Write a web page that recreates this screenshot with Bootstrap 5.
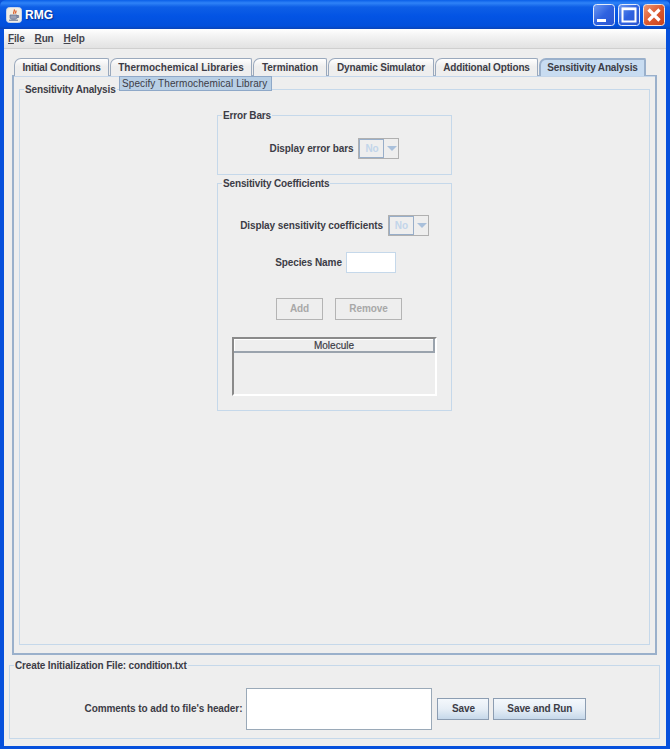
<!DOCTYPE html>
<html lang="en">
<head>
<meta charset="utf-8">
<title>RMG</title>
<link href="https://cdn.jsdelivr.net/npm/bootstrap@5.3.0/dist/css/bootstrap.min.css" rel="stylesheet">
<style>
html,body{margin:0;height:749px;overflow:hidden;background:#0a50d8}
body{font-family:"Liberation Sans",Arial,sans-serif;font-size:10px;letter-spacing:-.09px;font-weight:700;color:#3c3c46;line-height:14px}
.xp-win{width:670px;height:749px;background:#0650dc;padding:0 4px 3px 4px;border-radius:6px 6px 0 0}
.xp-title{height:29px;margin:0 -4px;padding:0 5px 0 6px;background:linear-gradient(#0a5fe8 0,#2f83f7 3px,#0e5fe6 7px,#0354e4 16px,#0250dc 26px,#0a44b8 29px);border-radius:6px 6px 0 0}
.xp-appicon{width:16px;height:16px;margin-right:3px;flex:none}
.xp-name{font-size:12px;letter-spacing:0;font-weight:700;color:#fff;text-shadow:1px 1px 1px #0a2f8f}
.xp-wbtn{width:22px;height:22px;flex:none;display:block}
.xp-wbtns{gap:3px;margin-top:1px}
.xp-body{height:717px;background:#eeeeee}
.xp-menu{height:20px;background:linear-gradient(#ffffff,#f2f2f2 40%,#e2e2e2);border-bottom:1px solid #cfcfcf;padding-left:4px;gap:10px;letter-spacing:-.16px}
.xp-menu span{color:#44444c}
.xp-menu u{text-decoration-thickness:1px;text-underline-offset:1px}
.xp-tabs.nav{margin:9px 0 0 10px;height:17px;border:0;gap:1px;flex-wrap:nowrap;position:relative;z-index:1}
.xp-tabs .nav-link{height:18px;padding:0;line-height:17px;text-align:center;border:1px solid #9aa9bd;border-bottom:0;border-radius:7px 2px 0 0;background:linear-gradient(#ffffff,#eeeeee 45%);color:#3c3c46;font-size:10px;font-weight:700;margin:0;letter-spacing:-.16px}
.xp-tabs .nav-link.active{background:#c8dcf1;border:2px solid #9ab0cb;border-bottom:0;line-height:15px;color:#3c3c46}
.xp-t1{width:95px}.xp-t2{width:142px}.xp-t3{width:74px}.xp-t4{width:106px}.xp-t5{width:103px}.xp-t6{width:107px}
.xp-tabs .nav-link.xp-t2{letter-spacing:.05px}
.xp-tabs .nav-link.xp-t3{letter-spacing:-.05px}
.xp-panel{margin:0 9px 0 8px;height:580px;border:2px solid #9ab0cb;border-top-width:1px;padding:6px 5px 7px 5px;position:relative}
.xp-panel::before{content:"";position:absolute;left:0;right:0;top:0;height:1px;background:#c4d6ea}
fieldset.xp-set{border:1px solid #c5d8ea;margin:0;padding:0;min-width:0}
fieldset.xp-set>legend{float:none;width:auto;font-size:10px;font-weight:700;line-height:12px;margin:0 0 0 4px;padding:2px 1px 0;color:#3c3c46;letter-spacing:-.15px}
.xp-outer{height:563px;padding-top:0}
.xp-col{width:235px;margin:12px auto 0}
fieldset.xp-err{height:67px;margin-bottom:1px}
fieldset.xp-sens{height:235px}
.xp-errrow{margin-top:16px;height:21px}
.xp-combo{width:41px;height:21px;flex:none;margin-left:5px;border:1px solid #b0b0b0;background:#eeeeee}
.xp-combo b{width:25px;height:19px;border:1px solid #98aec9;margin:0;text-align:center;line-height:17px;color:#c2d5ea;font-weight:700;display:block}
.xp-combo i{flex:1;display:block;position:relative}
.xp-combo i::after{content:"";position:absolute;left:3px;top:7px;border:5px solid transparent;border-top:5px solid #a9c0db;border-bottom:0}
.xp-senrow{margin-top:25px;height:21px;padding-left:0}
.xp-spcrow{margin-top:16px;height:21px;padding-left:2px}
input.xp-inp.form-control{width:50px;height:21px;min-height:0;padding:0 2px;margin-left:4px;border:1px solid #c5d8ea;border-radius:0;background:#fff;flex:none}
.xp-btnrow{margin-top:25px;gap:12px;height:22px;padding-left:9px}
.btn.xp-dis{height:22px;padding:0;border:1px solid #b4b4b4;border-radius:0;background:#eeeeee;color:#a8a8a8;font-size:10px;font-weight:700;line-height:20px;opacity:1;letter-spacing:-.09px}
.xp-add{width:47px}.xp-rem{width:67px}
.xp-tablebox{margin:17px 0 0 14px;width:205px;height:59px;border-top:2px solid #8a8a8a;border-left:2px solid #8a8a8a;border-right:2px solid #fff;border-bottom:2px solid #fff}
.xp-tablebox .table{margin:0;--bs-table-bg:transparent;font-size:10px}
.xp-tablebox th{height:12px;padding:0;border:0;border-top:1px solid #fff;border-bottom:2px solid #9aa3ad;border-right:2px solid #9aa3ad;border-left:1px solid #fff;font-weight:400;text-align:center;line-height:10px;color:#3c3c46;-webkit-text-stroke:.2px #3c3c46;letter-spacing:.02px}
fieldset.xp-foot{margin:3px 6px 0 5px;height:81px}
.xp-footrow{margin-top:16px;height:42px;padding-left:2px}
.xp-area.form-control{width:186px;height:42px;min-height:0;margin:0 5px 0 4px;border:1px solid #9aa9b8;border-radius:0;background:#fff;padding:0;resize:none;flex:none;box-shadow:none}
.btn.xp-go{height:22px;padding:0;border:1px solid #8c9db2;border-radius:0;background:linear-gradient(#f4f8fc,#e6eef6 50%,#c6d8ea);color:#3c3c46;font-size:10px;font-weight:700;line-height:20px;letter-spacing:-.09px}
.xp-save{width:52px;margin-right:4px}.xp-run{width:93px}
.xp-tip{position:absolute;left:119px;top:76px;width:153px;height:15px;background:#b8cfe5;border:1px solid #8ea8c8;font-weight:400;color:#3c3c46;line-height:13px;padding-left:2px;z-index:3;font-size:10px;letter-spacing:.09px;white-space:nowrap}
</style>
</head>
<body>
<div class="xp-win position-relative">
  <div class="xp-title d-flex align-items-center">
    <svg class="xp-appicon" viewBox="0 0 16 16">
      <rect x=".5" y=".5" width="15" height="15" rx="3" fill="#f1ede4" stroke="#c8d4ea"/>
      <path d="M8 2.5c1.5 1.5-1.5 2.5 0 4.5M9.8 3.5c.8 1-.8 1.8 0 3" fill="none" stroke="#d9541e" stroke-width="1.2"/>
      <path d="M4 8h7v2.6c0 1-1 1.6-2 1.6H6c-1 0-2-.6-2-1.6zM11 8.5h1.6v2H11" fill="#9aa0b4" stroke="#5c6a8c" stroke-width=".7"/>
      <path d="M3 13.2h9" stroke="#5c6a8c"/>
    </svg>
    <span class="xp-name">RMG</span>
    <div class="d-flex ms-auto xp-wbtns">
      <svg class="xp-wbtn" viewBox="0 0 22 22"><defs><linearGradient id="bl" x1="0" y1="0" x2="1" y2="1"><stop offset="0" stop-color="#6f9bf2"/><stop offset=".5" stop-color="#2f62e0"/><stop offset="1" stop-color="#2b55d0"/></linearGradient></defs><rect x=".5" y=".5" width="21" height="21" rx="3" fill="url(#bl)" stroke="#e4ecfb"/><rect x="4" y="15" width="9" height="3" fill="#fff"/></svg>
      <svg class="xp-wbtn" viewBox="0 0 22 22"><rect x=".5" y=".5" width="21" height="21" rx="3" fill="url(#bl)" stroke="#e4ecfb"/><rect x="4.5" y="4.5" width="13" height="13" fill="none" stroke="#fff" stroke-width="2"/><path d="M4 5h14" stroke="#fff" stroke-width="2.4"/></svg>
      <svg class="xp-wbtn" viewBox="0 0 22 22"><defs><linearGradient id="rd" x1="0" y1="0" x2="1" y2="1"><stop offset="0" stop-color="#ee9a78"/><stop offset=".5" stop-color="#dc5a30"/><stop offset="1" stop-color="#c8401c"/></linearGradient></defs><rect x=".5" y=".5" width="21" height="21" rx="3" fill="url(#rd)" stroke="#f2e4de"/><path d="M5.5 5.5l11 11M16.5 5.5l-11 11" stroke="#fff" stroke-width="3.2"/></svg>
    </div>
  </div>
  <div class="xp-body">
    <div class="xp-menu d-flex align-items-center">
      <span><u>F</u>ile</span><span><u>R</u>un</span><span><u>H</u>elp</span>
    </div>
    <ul class="nav nav-tabs xp-tabs">
      <li class="nav-item"><a class="nav-link xp-t1" href="#">Initial Conditions</a></li>
      <li class="nav-item"><a class="nav-link xp-t2" href="#">Thermochemical Libraries</a></li>
      <li class="nav-item"><a class="nav-link xp-t3" href="#">Termination</a></li>
      <li class="nav-item"><a class="nav-link xp-t4" href="#">Dynamic Simulator</a></li>
      <li class="nav-item"><a class="nav-link xp-t5" href="#">Additional Options</a></li>
      <li class="nav-item"><a class="nav-link active xp-t6" href="#">Sensitivity Analysis</a></li>
    </ul>
    <div class="xp-panel">
      <fieldset class="xp-set xp-outer">
        <legend>Sensitivity Analysis</legend>
        <div class="xp-col">
          <fieldset class="xp-set xp-err">
            <legend>Error Bars</legend>
            <div class="d-flex justify-content-center align-items-center xp-errrow">
              <span>Display error bars</span>
              <div class="xp-combo d-flex"><b>No</b><i></i></div>
            </div>
          </fieldset>
          <fieldset class="xp-set xp-sens">
            <legend>Sensitivity Coefficients</legend>
            <div class="d-flex justify-content-center align-items-center xp-senrow">
              <span>Display sensitivity coefficients</span>
              <div class="xp-combo d-flex"><b>No</b><i></i></div>
            </div>
            <div class="d-flex justify-content-center align-items-center xp-spcrow">
              <span>Species Name</span>
              <input class="form-control xp-inp" type="text" aria-label="Species Name">
            </div>
            <div class="d-flex justify-content-center xp-btnrow">
              <button class="btn xp-dis xp-add" disabled>Add</button>
              <button class="btn xp-dis xp-rem" disabled>Remove</button>
            </div>
            <div class="xp-tablebox">
              <table class="table"><thead><tr><th>Molecule</th></tr></thead></table>
            </div>
          </fieldset>
        </div>
      </fieldset>
    </div>
    <fieldset class="xp-set xp-foot">
      <legend>Create Initialization File: condition.txt</legend>
      <div class="d-flex justify-content-center align-items-center xp-footrow">
        <span>Comments to add to file's header:</span>
        <textarea class="form-control xp-area" aria-label="Comments"></textarea>
        <button class="btn xp-go xp-save">Save</button>
        <button class="btn xp-go xp-run">Save and Run</button>
      </div>
    </fieldset>
  </div>
  <div class="xp-tip">Specify Thermochemical Library</div>
</div>
</body>
</html>
